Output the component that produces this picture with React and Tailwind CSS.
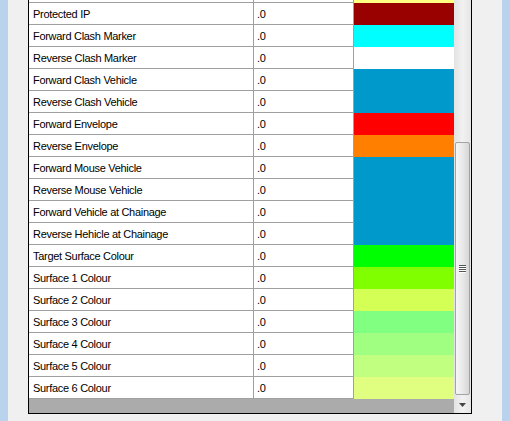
const rows = [
  ["", "#ffff80"],
  ["Protected IP", "#990000"],
  ["Forward Clash Marker", "#00ffff"],
  ["Reverse Clash Marker", "#ffffff"],
  ["Forward Clash Vehicle", "#0099cc"],
  ["Reverse Clash Vehicle", "#0099cc"],
  ["Forward Envelope", "#ff0000"],
  ["Reverse Envelope", "#ff8000"],
  ["Forward Mouse Vehicle", "#0099cc"],
  ["Reverse Mouse Vehicle", "#0099cc"],
  ["Forward Vehicle at Chainage", "#0099cc"],
  ["Reverse Hehicle at Chainage", "#0099cc"],
  ["Target Surface Colour", "#00ff00"],
  ["Surface 1 Colour", "#80ff00"],
  ["Surface 2 Colour", "#d4ff55"],
  ["Surface 3 Colour", "#80ff80"],
  ["Surface 4 Colour", "#a0ff80"],
  ["Surface 5 Colour", "#c0ff80"],
  ["Surface 6 Colour", "#e0ff80"],
];

function Row({ label, color }) {
  return (
    <div className="flex h-[22px]">
      <div className="w-[225px] bg-white border-r border-b border-[#a0a0a0] pl-[4px] pt-[2px] flex items-center whitespace-nowrap">
        {label}
      </div>
      <div className="w-[100px] bg-white border-r border-b border-[#a0a0a0] pl-[3px] pt-[2px] flex items-center">
        {label ? ".0" : ""}
      </div>
      <div className="w-[100px]" style={{ backgroundColor: color }} />
    </div>
  );
}

function Scrollbar() {
  return (
    <div className="w-[17px] flex flex-col bg-gradient-to-r from-[#e3e3e3] via-[#f1f1f1] to-[#e6e6e6]">
      <div className="h-[142px]" />
      {/* thumb */}
      <div className="h-[253px] mx-[1px] rounded-[2px] border border-[#a3a3a3] bg-gradient-to-r from-[#f6f6f6] via-[#e9e9e9] to-[#d6d6d6] flex flex-col items-center justify-center gap-[1px]">
        {[0, 1, 2, 3].map((i) => (
          <div key={i} className="w-[7px] h-[1px] bg-[#555555] shadow-[0_1px_0_#ffffff]" />
        ))}
      </div>
      <div className="h-[1px]" />
      {/* down arrow */}
      <div className="h-[17px] flex items-center justify-center">
        <svg width="7" height="4" viewBox="0 0 7 4">
          <path d="M0 0 H7 L3.5 4 Z" fill="#444444" />
        </svg>
      </div>
    </div>
  );
}

export default function App() {
  return (
    <div className="w-[510px] h-[421px] bg-[#f0f0f0] flex overflow-hidden font-['Liberation_Sans',Arial,sans-serif] text-[11px] tracking-[-0.3px] text-black">
      <div className="w-[8px] bg-[#bad3ec]" />
      <div className="flex-1 flex flex-col">
        <div className="h-[414px] flex pl-[20px] pr-[30px]">
          <div className="flex-1 flex border-x border-b border-black overflow-hidden">
            <div className="w-[425px] bg-[#ababab] overflow-hidden">
              <div className="-mt-[19px]">
                {rows.map(([label, color], i) => (
                  <Row key={i} label={label} color={color} />
                ))}
              </div>
            </div>
            <Scrollbar />
          </div>
        </div>
      </div>
      <div className="w-[8px] bg-[#bad3ec]" />
    </div>
  );
}
